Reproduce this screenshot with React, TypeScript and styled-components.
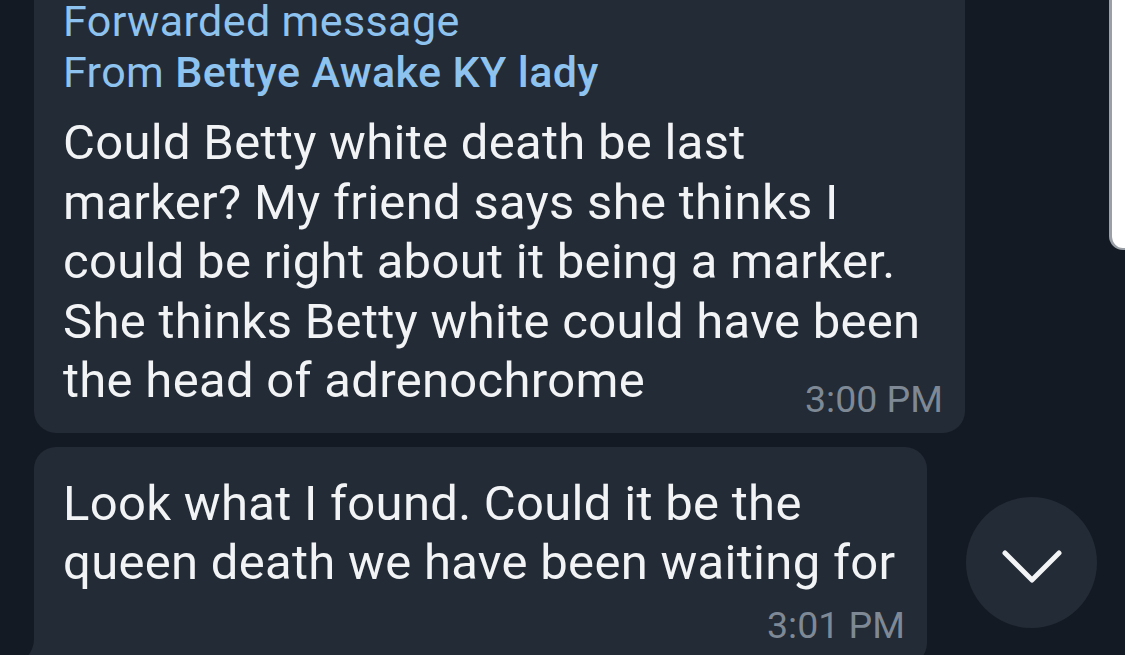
import React from 'react';
import styled, { createGlobalStyle, css } from 'styled-components';

const GlobalStyle = createGlobalStyle`
  html, body {
    margin: 0;
    padding: 0;
    width: 1125px;
    height: 655px;
    overflow: hidden;
    background: #141a23;
  }
`;

const Screen = styled.div`
  position: relative;
  width: 1125px;
  height: 655px;
  overflow: hidden;
  background: #141a23;
  font-family: Roboto, 'Noto Sans', sans-serif;
`;

const MessageList = styled.div`
  display: flex;
  flex-direction: column;
  align-items: flex-start;
  gap: 14px;
  margin-top: -30px;
  padding-left: 34px;
`;

const Bubble = styled.div<{ $width: number; $top: number; $bottom: number; $tail?: boolean }>`
  position: relative;
  box-sizing: border-box;
  width: ${(p) => p.$width}px;
  background: #232b36;
  border-radius: 22px;
  padding: ${(p) => p.$top}px 22px ${(p) => p.$bottom}px 29px;
  ${(p) =>
    p.$tail &&
    css`
      border-bottom-left-radius: 0;
      &::before {
        content: '';
        position: absolute;
        left: -22px;
        bottom: 0;
        width: 24px;
        height: 26px;
        background: #232b36;
      }
      &::after {
        content: '';
        position: absolute;
        left: -46px;
        bottom: 0;
        width: 46px;
        height: 30px;
        background: #141a23;
        border-bottom-right-radius: 26px;
      }
    `}
`;

const ForwardHeader = styled.div`
  color: #8fc3ef;
  font-size: 43px;
  line-height: 51px;
  letter-spacing: 0.4px;
  margin-bottom: 15px;
  b {
    font-weight: 500;
  }
`;

// time either sits beside the last line (same cell) or drops to a new row
const Content = styled.div<{ $inlineTime?: boolean }>`
  display: grid;
  grid-template-columns: 1fr;
  grid-template-areas: ${(p) => (p.$inlineTime ? `'cell'` : `'cell' 'time'`)};
`;

const BodyText = styled.div`
  grid-area: cell;
  color: #f1f3f5;
  font-size: 49px;
  line-height: 59.5px;
  letter-spacing: 0.3px;
`;

const Time = styled.span<{ $inlineTime?: boolean }>`
  grid-area: ${(p) => (p.$inlineTime ? 'cell' : 'time')};
  justify-self: end;
  align-self: end;
  color: #7e8995;
  font-size: 37.5px;
  line-height: 40px;
  margin-bottom: ${(p) => (p.$inlineTime ? '-8px' : '0')};
  margin-top: ${(p) => (p.$inlineTime ? '0' : '12px')};
`;

const ScrollDown = styled.button`
  position: absolute;
  left: 966px;
  top: 497px;
  width: 131px;
  height: 131px;
  border: none;
  border-radius: 50%;
  background: #232b36;
  display: flex;
  align-items: center;
  justify-content: center;
  padding: 8px 0 0;
  box-sizing: border-box;
`;

const SidePanel = styled.div`
  position: absolute;
  right: 0;
  top: -20px;
  width: 13px;
  height: 268px;
  background: #ffffff;
  border-left: 3px solid #9aa0a6;
  border-bottom: 2px solid #9aa0a6;
  border-bottom-left-radius: 14px;
`;

export default function App() {
  return (
    <Screen>
      <GlobalStyle />
      <MessageList>
        <Bubble $width={931} $top={26} $bottom={22}>
          <ForwardHeader>
            Forwarded message
            <br />
            From <b>Bettye Awake KY lady</b>
          </ForwardHeader>
          <Content $inlineTime>
            <BodyText>
              Could Betty white death be last
              <br />
              marker? My friend says she thinks I
              <br />
              could be right about it being a marker.
              <br />
              She thinks Betty white could have been
              <br />
              the head of adrenochrome
            </BodyText>
            <Time $inlineTime>3:00 PM</Time>
          </Content>
        </Bubble>
        <Bubble $width={893} $top={27} $bottom={20} $tail>
          <Content>
            <BodyText>
              Look what I found. Could it be the
              <br />
              queen death we have been waiting for
            </BodyText>
            <Time>3:01 PM</Time>
          </Content>
        </Bubble>
      </MessageList>
      <ScrollDown aria-label="Scroll to bottom">
        <svg width="60" height="34" viewBox="0 0 60 34" fill="none">
          <path d="M3 3 L30 30 L57 3" stroke="#f2f4f6" strokeWidth="5" strokeLinecap="round" strokeLinejoin="round" />
        </svg>
      </ScrollDown>
      <SidePanel />
    </Screen>
  );
}
